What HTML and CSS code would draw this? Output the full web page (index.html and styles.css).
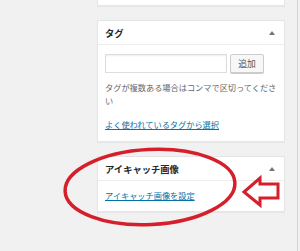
FILE: index.html
```html
<!DOCTYPE html>
<html lang="ja">
<head>
	<meta charset="UTF-8">
	<title>メタボックス</title>
	<link rel="stylesheet" href="styles.css">
</head>
<body>
	<div class="page">
		<div class="side">
			<div class="box box-top"></div>
			<div class="box">
				<div class="box-head">
					<span class="box-title">タグ</span>
					<span class="toggle"></span>
				</div>
				<div class="box-body">
					<div class="tag-add">
						<input class="tag-input" type="text">
						<button class="btn">追加</button>
					</div>
					<p class="howto">タグが複数ある場合はコンマで区切ってください</p>
					<a class="link link-tags" href="#">よく使われているタグから選択</a>
				</div>
			</div>
			<div class="box">
				<div class="box-head">
					<span class="box-title">アイキャッチ画像</span>
					<span class="toggle"></span>
				</div>
				<div class="box-body box-body-thumb">
					<a class="link" href="#">アイキャッチ画像を設定</a>
				</div>
			</div>
		</div>
		<!-- 赤い手書きの注釈 -->
		<svg class="marks" width="300" height="251" viewBox="0 0 300 251">
			<ellipse cx="150" cy="187" rx="85" ry="37.5" transform="rotate(-3 150 187)" fill="none" stroke="#d51f2a" stroke-width="3.5"/>
			<polygon points="244,192 260,178 260,184 278,184 278,198 260,198 260,205" fill="none" stroke="#d51f2a" stroke-width="3" stroke-linejoin="miter"/>
		</svg>
	</div>
</body>
</html>
```
FILE: styles.css
```css
*{
	padding: 0;
	margin: 0;
	box-sizing: border-box;
}
html,body{
	background: #f1f1f1;
	font-family: "Noto Sans CJK JP", "Liberation Sans", sans-serif;
	color: #444;
}
.page{
	position: relative;
	width: 298px;
	height: 251px;
	border-right: 1px solid #d2d2d2;
	overflow: hidden;
}
.side{
	width: 188px;
	margin-left: 97px;
}
.box{
	background: #fff;
	border: 1px solid #e5e5e5;
	margin-top: 14px;
	box-shadow: 0 1px 1px rgba(0,0,0,.04);
}
.box-top{
	height: 6px;
	margin-top: 0;
	border-top: none;
}
.box-head{
	display: flex;
	align-items: center;
	justify-content: space-between;
	height: 24px;
	padding: 1px 9px 0 7px;
	border-bottom: 1px solid #eee;
}
.box-title{
	font-size: 9.3px;
	font-weight: bold;
	color: #23282d;
}
.toggle{
	width: 0;
	height: 0;
	border-left: 3px solid transparent;
	border-right: 3px solid transparent;
	border-bottom: 4px solid #72777c;
	margin-top: -1px;
}
.box-body{
	padding: 9px 7px 10px 7px;
	font-size: 8.2px;
	line-height: 13px;
}
.tag-add{
	display: flex;
	gap: 3px;
}
.tag-input{
	width: 122px;
	height: 19px;
	border: 1px solid #ddd;
	box-shadow: inset 0 1px 2px rgba(0,0,0,.07);
	background: #fff;
}
.btn{
	width: 34px;
	height: 19px;
	border: 1px solid #ccc;
	border-radius: 2px;
	background: #f7f7f7;
	color: #555;
	font-family: inherit;
	font-size: 8.8px;
	box-shadow: 0 1px 0 #ccc;
}
.howto{
	margin-top: 8px;
	color: #666;
	width: 175px;
}
.link{
	color: #0073aa;
	text-decoration: underline;
}
.link-tags{
	display: block;
	margin-top: 11px;
}
.box-body-thumb{
	padding-top: 8px;
	padding-bottom: 9px;
}
.marks{
	position: absolute;
	left: 0;
	top: 0;
}
```
